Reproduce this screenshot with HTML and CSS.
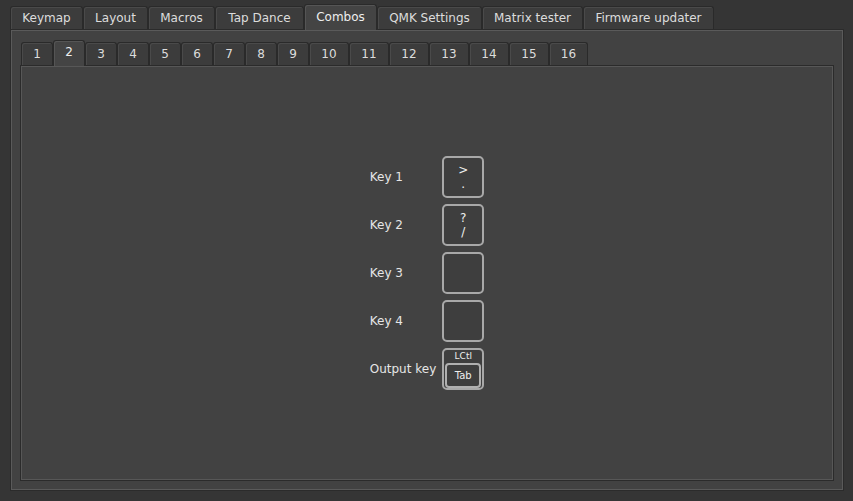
FILE: index.html
```html
<!DOCTYPE html>
<html>
<head>
<meta charset="utf-8">
<link rel="stylesheet" href="styles.css">
</head>
<body>
<div class="app">
  <div class="tabbar">
    <div class="tab t-keymap">Keymap</div>
    <div class="tab t-layout">Layout</div>
    <div class="tab t-macros">Macros</div>
    <div class="tab t-tapdance">Tap Dance</div>
    <div class="tab t-combos active">Combos</div>
    <div class="tab t-qmk">QMK Settings</div>
    <div class="tab t-matrix">Matrix tester</div>
    <div class="tab t-firmware">Firmware updater</div>
  </div>
  <div class="pane">
    <div class="tabbar inner">
      <div class="ctab">1</div>
      <div class="ctab active">2</div>
      <div class="ctab">3</div>
      <div class="ctab">4</div>
      <div class="ctab">5</div>
      <div class="ctab">6</div>
      <div class="ctab">7</div>
      <div class="ctab">8</div>
      <div class="ctab">9</div>
      <div class="ctab wide">10</div>
      <div class="ctab wide">11</div>
      <div class="ctab wide">12</div>
      <div class="ctab wide">13</div>
      <div class="ctab wide">14</div>
      <div class="ctab wide">15</div>
      <div class="ctab wide last">16</div>
    </div>
    <div class="innerpane">
      <div class="combo">
        <div class="label">Key 1</div>
        <div class="key"><span>&gt;</span><span>.</span></div>
        <div class="label">Key 2</div>
        <div class="key"><span>?</span><span>/</span></div>
        <div class="label">Key 3</div>
        <div class="key"></div>
        <div class="label">Key 4</div>
        <div class="key"></div>
        <div class="label">Output key</div>
        <div class="key mod">
          <span class="modname">LCtl</span>
          <span class="inner-key">Tab</span>
        </div>
      </div>
    </div>
  </div>
</div>
</body>
</html>
```

FILE: styles.css
```css
html, body {
  margin: 0;
  padding: 0;
  background: #353535;
  font-family: "DejaVu Sans", sans-serif;
  font-size: 12px;
  color: #e2e2e2;
}

.app {
  width: 853px;
  height: 501px;
  box-sizing: border-box;
  padding: 4px 9px 10px 10px;
}

.tabbar {
  display: flex;
  align-items: flex-end;
  height: 25px;
  position: relative;
  z-index: 2;
}

.tab {
  box-sizing: border-box;
  height: 23px;
  border: 1px solid #2a2a2a;
  border-bottom: none;
  border-radius: 3px 3px 0 0;
  background: #3c3c3c;
  box-shadow: inset 1px 1px 0 #4a4a4a;
  line-height: 22px;
  text-align: center;
  color: #dcdcdc;
  white-space: nowrap;
}

.t-keymap { width: 73px; }
.t-layout { width: 65px; }
.t-macros { width: 67px; }
.t-tapdance { width: 89px; }
.t-combos { width: 73px; }
.t-qmk { width: 105px; }
.t-matrix { width: 101px; }
.t-firmware { width: 131px; }

.tab.active {
  height: 26px;
  margin-bottom: -1px;
  background: #444444;
  box-shadow: inset 1px 1px 0 #555555;
  color: #eeeeee;
  line-height: 24px;
}

.pane {
  box-sizing: border-box;
  height: 462px;
  border: 1px solid #2b2b2b;
  background: #424242;
  box-shadow: inset 1px 1px 0 #5a5a5a, inset -1px -1px 0 #5a5a5a;
  padding: 10px 9px 9px 9px;
  display: flex;
  flex-direction: column;
}

.tabbar.inner {
  height: 25px;
  padding-left: 1px;
}

.ctab {
  box-sizing: border-box;
  width: 32px;
  height: 23px;
  border: 1px solid #2a2a2a;
  border-bottom: none;
  border-radius: 3px 3px 0 0;
  background: #3c3c3c;
  box-shadow: inset 1px 1px 0 #4a4a4a;
  text-align: center;
  line-height: 22px;
  color: #dcdcdc;
}

.ctab.wide {
  width: 40px;
}

.ctab.last {
  width: 39px;
}

.ctab.active {
  height: 26px;
  margin-bottom: -1px;
  background: #444444;
  box-shadow: inset 1px 1px 0 #555555;
  line-height: 23px;
  color: #eeeeee;
}

.innerpane {
  flex: 1;
  box-sizing: border-box;
  border: 1px solid #2b2b2b;
  background: #424242;
  box-shadow: inset 1px 1px 0 #575757, inset -1px -1px 0 #575757;
  display: flex;
  align-items: center;
  justify-content: center;
}

.combo {
  display: grid;
  grid-template-columns: auto 42px;
  grid-auto-rows: 42px;
  column-gap: 6px;
  row-gap: 6px;
  align-items: center;
  margin-top: -1px;
}

.label {
  color: #e6e6e6;
  font-size: 12px;
}

.key {
  box-sizing: border-box;
  width: 42px;
  height: 42px;
  border: 2px solid #a8a8a8;
  border-radius: 5px;
  background: #3e3e3e;
  display: flex;
  flex-direction: column;
  align-items: center;
  justify-content: center;
  line-height: 14px;
  color: #eeeeee;
  font-size: 12px;
}

.key.mod {
  justify-content: flex-start;
  padding-top: 1px;
}

.modname {
  font-size: 9px;
  line-height: 11px;
  color: #eeeeee;
}

.inner-key {
  box-sizing: border-box;
  width: 36px;
  height: 25px;
  margin-top: 1px;
  border: 2px solid #b0b0b0;
  border-radius: 4px;
  font-size: 10px;
  line-height: 21px;
  text-align: center;
  color: #eeeeee;
}
```
